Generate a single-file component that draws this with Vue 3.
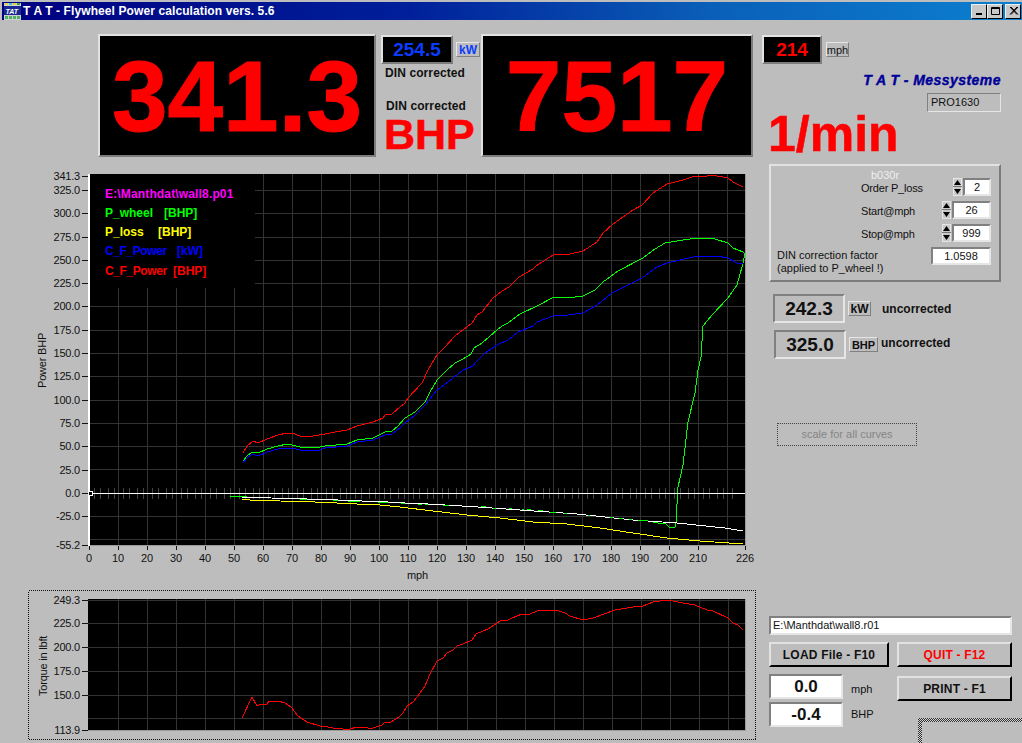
<script setup>
const range = (n, f) => Array.from({ length: n }, (_, i) => f(i))
const vx = range(22, i => 118 + 29 * i)
const hy = [190, 213, 237, 260, 283, 306, 330, 353, 376, 400, 423, 446, 469, 516, 539]
const ticks = [...range(45, i => 93.5 + 14.5 * i), ...range(44, i => 99.5 + 14.5 * i)].map(Math.round)
const yLabels = [
  ['341.3', 176], ['325.0', 190], ['300.0', 213], ['275.0', 237], ['250.0', 260], ['225.0', 283],
  ['200.0', 306], ['175.0', 330], ['150.0', 353], ['125.0', 376], ['100.0', 400], ['75.0', 423],
  ['50.0', 446], ['25.0', 470], ['0.0', 493], ['-25.0', 516], ['-55.2', 545]
]
const xLabels = [...range(22, i => [String(i * 10), 89 + 29 * i]), ['226', 745]]
const tLabels = [['249.3', 599], ['225.0', 622], ['200.0', 646], ['175.0', 670], ['150.0', 694], ['113.9', 729]]
const tVx = range(22, i => 118 + 29 * i + (i >= 12 ? 1 : 0))
const tHy = [599, 622, 646, 670, 694, 717]

const red = '243,453 247,446 253,441 258,443 267,439 278,435 287,433 292,433 300,436 313,436 325,434 335,432 347,430 357,426 373,422 383,418 385,415 392,414 400,407 405,403 408,398 422,383 428,370 437,355 445,347 455,336 463,330 472,323 477,315 482,312 493,298 502,291 509,287 519,277 533,269 536,266 553,255 557,254 570,254 583,251 597,242 603,233 613,224 633,210 642,205 653,193 667,184 683,180 695,176 707,176 712,175 728,178 733,182 743,187'
const green = '243,461 247,456 252,452 258,453 267,449 278,446 287,444 292,445 300,447 320,447 325,446 347,444 357,440 373,438 385,432 392,431 398,426 405,418 415,412 425,402 430,392 437,380 447,370 455,363 463,359 471,354 474,348 482,343 497,330 502,326 508,323 520,314 537,306 554,297 575,297 583,296 595,290 603,282 618,271 643,258 655,249 665,243 683,240 697,238 715,239 728,243 733,248 743,252 745,254 742,267 737,285 728,298 712,315 703,326 701,357 698,370 695,393 688,422 683,465 678,487 676,522 675,527 669,527 665,523 658,523'
const blue = '243,463 247,458 252,454 258,456 267,452 278,449 292,448 300,450 317,451 325,448 347,446 357,442 373,440 385,435 392,434 400,428 405,423 415,415 425,405 437,390 448,382 463,370 473,366 476,362 485,353 497,345 508,340 518,332 533,326 537,322 553,316 568,315 583,313 597,305 612,293 642,278 657,267 667,263 693,257 717,256 728,258 737,263 743,264'
const white = '242,497 271,498 307,499 338,500 362,501 388,502 405,503 428,504 445,505 478,507 520,510 577,514 633,520 677,523 725,528 743,531'
const yellow = '242,499 250,500 280,501 315,502 337,503 357,504 380,505 400,507 433,511 467,515 500,518 533,522 567,524 600,528 633,533 667,538 700,541 743,544'
const greenDashes = [
  [230, 247, 496], [300, 307, 499], [333, 338, 500], [348, 360, 501], [378, 388, 502], [401, 405, 503],
  [418, 422, 504], [425, 428, 504], [443, 449, 505], [481, 486, 506], [493, 496, 508], [509, 512, 508],
  [522, 524, 509], [527, 531, 509], [538, 543, 510], [550, 556, 512], [564, 567, 513], [588, 590, 515],
  [610, 613, 517], [619, 623, 518], [629, 632, 519], [638, 648, 520], [653, 658, 522]
]
const torque = '242,717 252,696 257,705 261,703 267,703 269,700 278,700 285,702 291,706 298,715 307,721 320,725 328,726 333,727 343,728 350,728 357,726 365,726 368,727 373,727 382,724 385,721 391,721 399,716 403,712 407,705 413,701 420,692 425,685 430,673 437,660 443,657 447,652 453,649 457,645 463,643 472,639 476,633 488,628 500,620 508,619 512,617 522,613 530,613 537,610 543,609 556,609 565,612 570,615 583,619 593,617 615,609 633,606 643,605 653,601 660,600 668,599 683,602 695,604 707,609 713,610 728,617 733,622 738,624 743,629'
</script>

<template>
  <div class="app">
    <header class="titlebar">
      <svg class="appicon" width="17" height="17" viewBox="0 0 17 17">
        <rect width="17" height="17" fill="#d0d0d0" />
        <rect x="1" y="0" width="3" height="2" fill="#e8d040" />
        <rect x="5" y="0" width="3" height="2" fill="#40c0d0" />
        <rect x="9" y="0" width="3" height="2" fill="#e8d040" />
        <rect x="13" y="0" width="3" height="2" fill="#40a040" />
        <rect x="0" y="3" width="17" height="9" fill="#182890" />
        <text x="1.5" y="10.5" class="icontext">TAT</text>
        <rect x="1" y="13" width="3" height="3" fill="#50b060" />
        <rect x="5" y="13" width="3" height="3" fill="#50b060" />
        <rect x="9" y="13" width="3" height="3" fill="#50b060" />
        <rect x="13" y="13" width="3" height="3" fill="#50b060" />
      </svg>
      <span class="titletext">T A T - Flywheel Power calculation vers. 5.6</span>
      <div class="winbtns">
        <button class="winbtn"><svg width="11" height="10" viewBox="0 0 11 10"><rect x="2" y="7" width="6" height="2" fill="#000" /></svg></button>
        <button class="winbtn"><svg width="11" height="10" viewBox="0 0 11 10"><path d="M1.5 1.5h8v7h-8zM1 2.5h9" fill="none" stroke="#000" /></svg></button>
        <button class="winbtn close"><svg width="11" height="10" viewBox="0 0 11 10"><path d="M2 1l7 7.5M3 1l7 7.5M9 1L2 8.5M10 1L3 8.5" stroke="#000" fill="none" /></svg></button>
      </div>
    </header>

    <div class="body">
      <section class="left">
        <div class="readouts">
          <div class="display power">341.3</div>
          <div class="midcol">
            <div class="minirow">
              <div class="minidisplay blue">254.5</div>
              <div class="unit unitblue">kW</div>
            </div>
            <div class="din din1">DIN corrected</div>
            <div class="din din2">DIN corrected</div>
            <div class="bhp">BHP</div>
          </div>
          <div class="display rpm">7517</div>
        </div>

        <svg class="chart" width="762" height="425" viewBox="0 165 762 425">
          <g shape-rendering="crispEdges">
            <rect x="88" y="174" width="658" height="372" fill="#000" />
            <line v-for="x in vx" :key="'v' + x" :x1="x + 0.5" :x2="x + 0.5" y1="174" y2="546" stroke="#333" />
            <line v-for="y in hy" :key="'h' + y" x1="90" x2="745" :y1="y + 0.5" :y2="y + 0.5" stroke="#333" />
            <line v-for="x in ticks" :key="'t' + x" :x1="x + 0.5" :x2="x + 0.5" y1="488" y2="499" stroke="#444" />
            <rect x="90" y="174" width="165" height="114" fill="#000" />
            <rect x="745" y="174" width="1" height="372" fill="#9a9a9a" />
            <rect x="88" y="545" width="658" height="1" fill="#9a9a9a" />
            <polyline :points="green" fill="none" stroke="#00ff00" />
            <polyline :points="blue" fill="none" stroke="#0000ff" />
            <polyline :points="red" fill="none" stroke="#ff0000" />
            <polyline :points="yellow" fill="none" stroke="#ffff00" />
            <polyline :points="white" fill="none" stroke="#ffffff" />
            <line v-for="d in greenDashes" :key="'g' + d[0]" :x1="d[0]" :x2="d[1]" :y1="d[2] + 0.5" :y2="d[2] + 0.5" stroke="#00ff00" />
            <rect x="90" y="493" width="655" height="1" fill="#fff" />
            <rect x="88" y="174" width="2" height="372" fill="#fff" />
            <rect x="88.5" y="491.5" width="4" height="4" fill="#000" stroke="#fff" />
            <line v-for="l in yLabels" :key="'yt' + l[0]" x1="82" x2="88" :y1="l[1] + 0.5" :y2="l[1] + 0.5" stroke="#111" />
            <line v-for="l in xLabels" :key="'xt' + l[0]" :x1="l[1] + 0.5" :x2="l[1] + 0.5" y1="546" y2="550" stroke="#111" />
          </g>
          <text v-for="l in yLabels" :key="'yl' + l[0]" class="axis" x="80" :y="l[1] + 4" text-anchor="end">{{ l[0] }}</text>
          <text v-for="l in xLabels" :key="'xl' + l[0]" class="axis" :x="l[1]" y="562" text-anchor="middle">{{ l[0] }}</text>
          <text class="axis" x="407" y="579">mph</text>
          <text class="axis" transform="translate(46 388) rotate(-90)">Power BHP</text>
          <g class="legend">
            <text x="105" y="198" fill="#ff00ff" class="wide">E:\Manthdat\wall8.p01</text>
            <text x="105" y="217" fill="#00ff00">P_wheel</text>
            <text x="164" y="217" fill="#00ff00">[BHP]</text>
            <text x="105" y="236" fill="#ffff00">P_loss</text>
            <text x="158" y="236" fill="#ffff00">[BHP]</text>
            <text x="105" y="255" fill="#0000ff" class="tight">C_F_Power</text>
            <text x="177" y="255" fill="#0000ff">[kW]</text>
            <text x="105" y="275" fill="#ff0000" class="tight">C_F_Power</text>
            <text x="173" y="275" fill="#ff0000">[BHP]</text>
          </g>
        </svg>

        <svg class="chart" width="762" height="154" viewBox="0 589 762 154">
          <g shape-rendering="crispEdges">
            <rect x="28.5" y="589.5" width="727" height="149" fill="none" stroke="#111" stroke-dasharray="1 1" />
            <rect x="88" y="598" width="658" height="132" fill="#000" />
            <line v-for="x in tVx" :key="'tv' + x" :x1="x + 0.5" :x2="x + 0.5" y1="598" y2="729" stroke="#333" />
            <line v-for="y in tHy" :key="'th' + y" x1="88" x2="745" :y1="y + 0.5" :y2="y + 0.5" stroke="#333" />
            <rect x="745" y="598" width="1" height="132" fill="#9a9a9a" />
            <rect x="88" y="729" width="658" height="1" fill="#9a9a9a" />
            <polyline :points="torque" fill="none" stroke="#ff0000" />
            <line v-for="l in tLabels" :key="'tt' + l[0]" x1="82" x2="88" :y1="l[1] + 0.5" :y2="l[1] + 0.5" stroke="#111" />
          </g>
          <text v-for="l in tLabels" :key="'tl' + l[0]" class="axis" x="80" :y="l[1] + 4" text-anchor="end">{{ l[0] }}</text>
          <text class="axis" transform="translate(47 695) rotate(-90)">Torque in lbft</text>
        </svg>
      </section>

      <aside class="right">
        <div class="minirow mphrow">
          <div class="minidisplay red">214</div>
          <div class="unit unitmph">mph</div>
        </div>
        <div class="brand">T A T - Messysteme</div>
        <div class="pro">PRO1630</div>
        <div class="rpmunit">1/min</div>

        <div class="control">
          <div class="ctitle">b030r</div>
          <div class="crow first">
            <span class="clabel">Order P_loss</span>
            <div class="cfield">
              <svg class="spin" width="9" height="18" viewBox="0 0 9 18"><rect x="0.5" y="0.5" width="8" height="17" fill="#c8c8c8" stroke="#e6e6e6" /><path d="M4.5 2L8 7H1zM1 11h7L4.5 16z" fill="#000" /><path d="M0 8.5h9" stroke="#777" /></svg>
              <div class="num w28">2</div>
            </div>
          </div>
          <div class="crow">
            <span class="clabel">Start@mph</span>
            <div class="cfield">
              <svg class="spin" width="9" height="18" viewBox="0 0 9 18"><rect x="0.5" y="0.5" width="8" height="17" fill="#c8c8c8" stroke="#e6e6e6" /><path d="M4.5 2L8 7H1zM1 11h7L4.5 16z" fill="#000" /><path d="M0 8.5h9" stroke="#777" /></svg>
              <div class="num w39">26</div>
            </div>
          </div>
          <div class="crow">
            <span class="clabel">Stop@mph</span>
            <div class="cfield">
              <svg class="spin" width="9" height="18" viewBox="0 0 9 18"><rect x="0.5" y="0.5" width="8" height="17" fill="#c8c8c8" stroke="#e6e6e6" /><path d="M4.5 2L8 7H1zM1 11h7L4.5 16z" fill="#000" /><path d="M0 8.5h9" stroke="#777" /></svg>
              <div class="num w39">999</div>
            </div>
          </div>
          <div class="crow">
            <span class="clabel din-factor">DIN correction factor<br />(applied to P_wheel !)</span>
            <div class="cfield"><div class="num w60">1.0598</div></div>
          </div>
        </div>

        <div class="uncrow r1">
          <div class="valbox">242.3</div>
          <div class="unit unitk">kW</div>
          <span class="unc">uncorrected</span>
        </div>
        <div class="uncrow r2">
          <div class="valbox">325.0</div>
          <div class="unit unitb">BHP</div>
          <span class="unc ub">uncorrected</span>
        </div>

        <div class="scale">scale for all curves</div>

        <div class="filepath">E:\Manthdat\wall8.r01</div>

        <div class="bottom">
          <div class="bleft">
            <button class="btn load">LOAD File - F10</button>
            <div class="readrow first"><div class="whitebox">0.0</div><span class="lab">mph</span></div>
            <div class="readrow"><div class="whitebox">-0.4</div><span class="lab lab2">BHP</span></div>
          </div>
          <div class="bright">
            <button class="btn quit">QUIT - F12</button>
            <button class="btn print">PRINT - F1</button>
            <div class="hatch"><div class="hatchin"></div></div>
          </div>
        </div>
      </aside>
    </div>
  </div>
</template>

<style>
html, body { margin: 0; background: #bdbdbd; }
</style>

<style scoped>
.app {
  width: 1022px;
  height: 743px;
  overflow: hidden;
  background: #bdbdbd;
  font-family: "Liberation Sans", Arial, sans-serif;
  color: #111;
}
.titlebar {
  display: flex;
  align-items: center;
  height: 18px;
  margin: 2px 0 0 2px;
  background: linear-gradient(90deg, #000080 0%, #00209a 40%, #0a60b8 70%, #0c80d0 100%);
}
.appicon { margin-left: 2px; flex: none; }
.icontext { font: italic bold 7px "Liberation Sans", sans-serif; fill: #fff; }
.titletext {
  margin-left: 2px;
  color: #fff;
  font-size: 12px;
  font-weight: 700;
  letter-spacing: 0.1px;
  white-space: nowrap;
}
.winbtns { display: flex; margin-left: auto; margin-right: 1px; }
.winbtn {
  display: flex;
  align-items: center;
  justify-content: center;
  width: 16px;
  height: 15px;
  padding: 0;
  border: 1px solid;
  border-color: #efefef #000 #000 #efefef;
  background: #c8c8c8;
}
.winbtn.close { margin-left: 2px; }
.body { display: flex; }
.left { width: 762px; flex: none; }
.readouts { display: flex; height: 123px; padding: 14px 0 0 98px; }
.display {
  display: flex;
  align-items: center;
  justify-content: center;
  box-sizing: border-box;
  height: 123px;
  background: #000;
  color: #f00;
  font-size: 100px;
  line-height: 100px;
  font-weight: 700;
  -webkit-text-stroke: 1px #f00;
  border: 2px solid;
  border-color: #e2e2e2 #7c7c7c #7c7c7c #e2e2e2;
}
.power { width: 278px; }
.rpm { width: 272px; }
.midcol { width: 105px; flex: none; padding-left: 5px; box-sizing: border-box; }
.minirow { display: flex; align-items: center; height: 29px; margin-top: 1px; }
.minidisplay {
  display: flex;
  align-items: center;
  justify-content: center;
  box-sizing: border-box;
  height: 29px;
  background: #000;
  border: 2px solid;
  border-color: #e2e2e2 #7c7c7c #7c7c7c #e2e2e2;
  font-size: 19px;
  font-weight: 700;
}
.midcol .minidisplay { width: 72px; }
.minidisplay.blue { color: #0a3cff; }
.minidisplay.red { color: #f00; width: 60px; }
.unit {
  display: flex;
  align-items: center;
  justify-content: center;
  box-sizing: border-box;
  height: 15px;
  border: 1px solid;
  border-color: #e6e6e6 #808080 #808080 #e6e6e6;
  font-size: 11px;
}
.unitblue { width: 24px; margin-left: 3px; color: #0a3cff; font-weight: 700; font-size: 12px; }
.unitmph { width: 23px; margin-left: 4px; }
.din { font-size: 12px; font-weight: 700; line-height: 14px; white-space: nowrap; }
.din1 { margin: 2px 0 0 4px; letter-spacing: 0.1px; }
.din2 { margin: 19px 0 0 5px; letter-spacing: 0.1px; }
.bhp {
  margin: -1px 0 0 3px;
  color: #f00;
  font-size: 43px;
  line-height: 44px;
  font-weight: 700;
  -webkit-text-stroke: 0.5px #f00;
  white-space: nowrap;
}
.chart { display: block; }
.left .chart:nth-of-type(1) { margin-top: 8px; }
.axis { font-family: "Liberation Sans", sans-serif; font-size: 11px; letter-spacing: -0.2px; fill: #111; }
.legend { font-family: "Liberation Sans", sans-serif; font-size: 12px; font-weight: 700; }
.wide { letter-spacing: 0.15px; }
.tight { letter-spacing: -0.4px; }
.right { width: 260px; flex: none; }
.mphrow { margin-top: 15px; }
.brand {
  margin-top: 8px;
  padding-right: 21px;
  color: #000099;
  font-size: 14px;
  line-height: 16px;
  font-weight: 700;
  font-style: italic;
  text-align: right;
  letter-spacing: 0.45px;
  -webkit-text-stroke: 0.4px #000099;
  white-space: nowrap;
}
.pro {
  box-sizing: border-box;
  width: 74px;
  height: 19px;
  margin: 5px 0 0 165px;
  padding-left: 3px;
  border: 1px solid;
  border-color: #808080 #e6e6e6 #e6e6e6 #808080;
  font-size: 11px;
  line-height: 17px;
}
.rpmunit {
  margin: -2px 0 0 6px;
  height: 48px;
  color: #f00;
  font-size: 50px;
  line-height: 48px;
  font-weight: 700;
  -webkit-text-stroke: 0.5px #f00;
}
.control {
  box-sizing: border-box;
  width: 232px;
  height: 118px;
  margin: 6px 0 0 7px;
  padding: 3px 8px 0 6px;
  border: 2px solid;
  border-color: #e2e2e2 #7c7c7c #7c7c7c #e2e2e2;
  font-size: 11px;
}
.ctitle { margin-left: 94px; color: #efefef; line-height: 12px; }
.crow { display: flex; height: 18px; margin-top: 5px; }
.crow.first { margin-top: -3px; }
.clabel { margin: 3px 0 0 84px; line-height: 14px; letter-spacing: -0.2px; white-space: nowrap; }
.clabel.din-factor { margin: 2px 0 0; line-height: 13px; letter-spacing: 0; }
.cfield { display: flex; margin-left: auto; gap: 1px; }
.num {
  box-sizing: border-box;
  height: 18px;
  background: #fff;
  border: 2px solid;
  border-color: #808080 #e6e6e6 #e6e6e6 #808080;
  font-size: 11px;
  line-height: 14px;
  text-align: center;
}
.w28 { width: 28px; }
.w39 { width: 39px; }
.w60 { width: 60px; }
.uncrow { display: flex; align-items: center; height: 29px; }
.r1 { margin: 12px 0 0 11px; }
.r2 { margin: 7px 0 0 12px; }
.valbox {
  display: flex;
  align-items: center;
  justify-content: center;
  box-sizing: border-box;
  width: 72px;
  height: 29px;
  border: 2px solid;
  border-color: #808080 #e6e6e6 #e6e6e6 #808080;
  font-size: 19px;
  font-weight: 700;
}
.unitk { width: 23px; margin-left: 3px; font-weight: 700; font-size: 12px; }
.unitb { width: 29px; margin-left: 3px; font-weight: 700; font-size: 11px; }
.unc { margin-left: 11px; font-size: 12px; font-weight: 700; white-space: nowrap; }
.ub { margin: -4px 0 0 3px; }
.scale {
  box-sizing: border-box;
  width: 140px;
  height: 23px;
  margin: 64px 0 0 15px;
  border: 1px dotted #444;
  color: #858585;
  font-size: 11px;
  line-height: 21px;
  text-align: center;
}
.filepath {
  box-sizing: border-box;
  width: 243px;
  height: 19px;
  margin: 170px 0 0 7px;
  padding-left: 2px;
  background: #fff;
  border: 2px solid;
  border-color: #808080 #e6e6e6 #e6e6e6 #808080;
  font-size: 11px;
  line-height: 15px;
}
.bottom { display: flex; margin: 7px 0 0 7px; }
.bleft { width: 120px; flex: none; }
.bright { width: 125px; margin-left: 8px; flex: none; }
.btn {
  display: block;
  box-sizing: border-box;
  height: 25px;
  padding: 0;
  background: #bdbdbd;
  border: 2px solid;
  border-color: #e2e2e2 #000 #000 #e2e2e2;
  font-family: inherit;
  font-size: 12px;
  font-weight: 700;
  letter-spacing: 0.2px;
  color: #111;
}
.load { width: 120px; }
.quit { width: 115px; color: #f00; }
.print { width: 115px; margin-top: 9px; }
.readrow { display: flex; margin-top: 3px; height: 25px; }
.readrow.first { margin-top: 7px; }
.whitebox {
  box-sizing: border-box;
  width: 74px;
  height: 25px;
  background: #fff;
  border: 2px solid;
  border-color: #808080 #e6e6e6 #e6e6e6 #808080;
  font-size: 17px;
  font-weight: 700;
  line-height: 21px;
  text-align: center;
}
.lab { margin: 9px 0 0 8px; font-size: 11px; line-height: 13px; }
.lab2 { margin-top: 6px; }
.hatch {
  box-sizing: border-box;
  width: 104px;
  height: 25px;
  margin: 17px 0 0 21px;
  padding: 4px 0 0 4px;
  background: repeating-conic-gradient(#2a2a2a 0 25%, #d8d8d8 0 50%) 0 0 / 2px 2px;
}
.hatchin { width: 100%; height: 100%; background: #bdbdbd; }
</style>
